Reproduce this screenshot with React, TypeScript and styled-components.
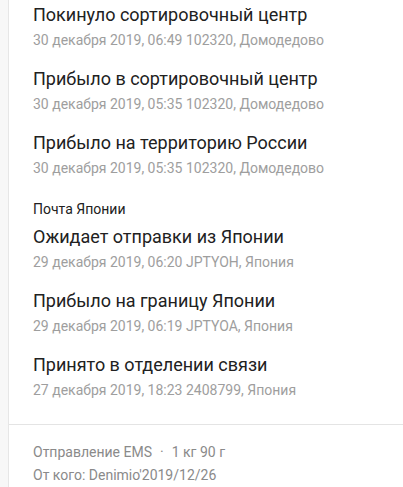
import React from "react";
import styled, { createGlobalStyle } from "styled-components";

const Global = createGlobalStyle`
  html, body { margin: 0; padding: 0; background: #f7f7f7; }
  body { font-family: Roboto, "Noto Sans", Arial, sans-serif; overflow: hidden; }
`;

const Page = styled.div`
  display: flex;
  min-height: 487px;
  padding-left: 8px;
`;

const Card = styled.div`
  flex: 1;
  background: #ffffff;
  border-left: 1px solid #e6e6e6;
  display: flex;
  flex-direction: column;
`;

const Group = styled.div`
  display: flex;
  flex-direction: column;
`;

const GroupTitle = styled.div`
  padding: 7px 0 3px 24px;
  font-size: 14px;
  line-height: 20px;
  color: #212121;
`;

const Item = styled.div`
  padding: 3px 0 14px 24px;
  display: flex;
  flex-direction: column;
  gap: 3px;
`;

const Title = styled.div`
  font-size: 18px;
  line-height: 24px;
  color: #212121;
`;

const Sub = styled.div`
  font-size: 14px;
  line-height: 20px;
  color: #9e9e9e;
`;

const Divider = styled.div`
  height: 1px;
  background: #e4e4e4;
  margin-top: 10px;
`;

const Footer = styled.div`
  padding: 17px 0 0 24px;
  display: flex;
  flex-direction: column;
  gap: 3px;
`;

const FooterLine = styled.div`
  font-size: 14px;
  line-height: 20px;
  color: #8a8a8a;
`;

const Dot = styled.span`
  margin: 0 8px;
`;

const russia = [
  ["Покинуло сортировочный центр", "30 декабря 2019, 06:49 102320, Домодедово"],
  ["Прибыло в сортировочный центр", "30 декабря 2019, 05:35 102320, Домодедово"],
  ["Прибыло на территорию России", "30 декабря 2019, 05:35 102320, Домодедово"],
];

const japan = [
  ["Ожидает отправки из Японии", "29 декабря 2019, 06:20 JPTYOH, Япония"],
  ["Прибыло на границу Японии", "29 декабря 2019, 06:19 JPTYOA, Япония"],
  ["Принято в отделении связи", "27 декабря 2019, 18:23 2408799, Япония"],
];

export default function App() {
  return (
    <>
      <Global />
      <Page>
        <Card>
          <Group>
            {russia.map(([t, s]) => (
              <Item key={t}>
                <Title>{t}</Title>
                <Sub>{s}</Sub>
              </Item>
            ))}
          </Group>
          <Group>
            <GroupTitle>Почта Японии</GroupTitle>
            {japan.map(([t, s]) => (
              <Item key={t}>
                <Title>{t}</Title>
                <Sub>{s}</Sub>
              </Item>
            ))}
          </Group>
          <Divider />
          <Footer>
            <FooterLine>
              Отправление EMS<Dot>·</Dot>1 кг 90 г
            </FooterLine>
            <FooterLine>От кого: Denimio'2019/12/26</FooterLine>
          </Footer>
        </Card>
      </Page>
    </>
  );
}
